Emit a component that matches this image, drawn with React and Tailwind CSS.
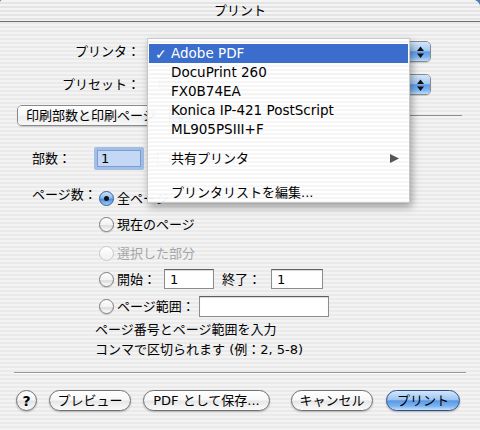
const stripes =
  "bg-[image:repeating-linear-gradient(180deg,#f3f3f3_0px,#f3f3f3_2px,#eaeaea_2px,#eaeaea_4px)]";

function Arrows() {
  return (
    <svg width="9" height="14" viewBox="0 0 9 14">
      <polygon points="4.5,1.5 8,6 1,6" fill="#111" />
      <polygon points="1,8.5 8,8.5 4.5,13" fill="#111" />
    </svg>
  );
}

function Popup({ className, children }) {
  return (
    <div
      className={
        "flex h-[21px] rounded-[5px] border border-[#8a8a8a] overflow-hidden shadow-[0_1px_1px_rgba(0,0,0,0.15)] " +
        className
      }
    >
      <div className="flex-1 flex items-center pl-[9px] bg-[linear-gradient(180deg,#ffffff_0%,#f6f6f6_50%,#ebebeb_51%,#f8f8f8_100%)] text-[#8a8a8a]">
        {children}
      </div>
      <div className="w-[21px] flex items-center justify-center border-l border-[#41649e] bg-[linear-gradient(180deg,#d3e6fb_0%,#a4caf4_45%,#5f9ce6_52%,#7fb6f2_80%,#bcdcfb_100%)]">
        <Arrows />
      </div>
    </div>
  );
}

function Field({ className, value }) {
  return (
    <div
      className={
        "flex items-center pl-[5px] bg-white border border-[#8c8c8c] border-t-[#5e5e5e] shadow-[inset_0_1px_1px_rgba(0,0,0,0.15)] " +
        className
      }
    >
      {value}
    </div>
  );
}

function Radio({ checked, disabled }) {
  if (checked) {
    return (
      <div className="w-[15px] h-[15px] rounded-full border border-[#3a5d96] flex items-center justify-center bg-[linear-gradient(180deg,#cfe3fb_0%,#8dbcf0_45%,#4f8fe0_55%,#9ccaf7_100%)]">
        <div className="w-[5px] h-[5px] rounded-full bg-[#111]" />
      </div>
    );
  }
  return (
    <div
      className={
        disabled
          ? "w-[15px] h-[15px] rounded-full border border-[#c8c8c8] bg-[linear-gradient(180deg,#ffffff,#f0f0f0)]"
          : "w-[15px] h-[15px] rounded-full border border-[#7c7c7c] bg-[linear-gradient(180deg,#ffffff_0%,#f2f2f2_50%,#dcdcdc_60%,#ffffff_100%)] shadow-[0_1px_1px_rgba(0,0,0,0.15)]"
      }
    />
  );
}

function Button({ className, children, blue }) {
  return (
    <div
      className={
        (blue
          ? "border-[#2e4f8c] bg-[linear-gradient(180deg,#d3e6fb_0%,#9cc5f3_45%,#5a98e4_52%,#7cb4f1_80%,#c5e1fc_100%)] "
          : "border-[#6f6f6f] bg-[linear-gradient(180deg,#ffffff_0%,#f7f7f7_48%,#e6e6e6_52%,#fbfbfb_100%)] ") +
        "h-[21px] rounded-full border flex items-center justify-center shadow-[0_1px_2px_rgba(0,0,0,0.25)] " +
        className
      }
    >
      {children}
    </div>
  );
}

function Menu() {
  const printers = ["DocuPrint 260", "FX0B74EA", "Konica IP-421 PostScript", "ML905PSIII+F"];
  return (
    <div className="absolute left-[147px] top-[38px] w-[263px] h-[165px] pt-[5px] bg-[image:repeating-linear-gradient(180deg,rgba(255,255,255,0.95)_0px,rgba(255,255,255,0.95)_2px,rgba(246,246,246,0.95)_2px,rgba(246,246,246,0.95)_4px)] border border-[#c9c9c9] shadow-[2px_4px_8px_rgba(0,0,0,0.35)]">
      <div className="h-[19px] mx-[1px] flex items-center bg-[#3a6dcc] text-white">
        <span className="w-[22px] pl-[6px] text-[14px] font-bold">✓</span>
        <span className="text-[13.5px]">Adobe PDF</span>
      </div>
      {printers.map((p) => (
        <div key={p} className="h-[19px] flex items-center pl-[23px] text-[13.5px]">
          {p}
        </div>
      ))}
      <div className="h-[10px]" />
      <div className="h-[19px] flex items-center pl-[23px] pr-[10px] justify-between">
        <span>共有プリンタ</span>
        <svg width="9" height="9" viewBox="0 0 9 9">
          <polygon points="0,0 9,4.5 0,9" fill="#555" />
        </svg>
      </div>
      <div className="h-[15px]" />
      <div className="h-[19px] flex items-center pl-[23px]">プリンタリストを編集...</div>
    </div>
  );
}

export default function App() {
  return (
    <div
      className="relative w-[480px] h-[430px] overflow-hidden bg-[#4f7ab8] text-[13px] text-black leading-none"
      style={{ fontFamily: '"DejaVu Sans", "Noto Sans CJK JP", sans-serif' }}
    >
      <div className={"relative w-[480px] h-[430px] rounded-tr-[7px] rounded-tl-[3px] " + stripes}>
        <div className="h-[22px] flex items-center justify-center border-b border-[#6c6c6c] bg-[image:repeating-linear-gradient(180deg,#f4f4f4_0px,#f4f4f4_2px,#e4e4e4_2px,#e4e4e4_4px)] rounded-tr-[7px] rounded-tl-[3px]">
          プリント
        </div>

        <div className="mt-[19px] flex items-center">
          <div className="w-[140px] text-right">プリンタ：</div>
          <Popup className="ml-[7px] w-[284px]" />
        </div>

        <div className="mt-[12px] flex items-center">
          <div className="w-[140px] text-right">プリセット：</div>
          <Popup className="ml-[7px] w-[284px]">標準</Popup>
        </div>

        <div className="mt-[10px] flex items-center pl-[17px] pr-[18px]">
          <Popup className="w-[174px]">
            <span className="text-black -ml-[1px]">印刷部数と印刷ページ</span>
          </Popup>
          <div className="flex-1 h-0 border-t border-[#8d8d8d]" />
        </div>

        <div className="mt-[21px] flex items-center h-[23px] pl-[32px]">
          <div className="w-[62px]">部数：</div>
          <div className="w-[50px] h-[23px] border-[3px] border-[#a3bfe6] rounded-[2px]">
            <div className="w-full h-full flex items-center pl-[3px] bg-[#c4d8f6] border border-[#7b9dd1]">1</div>
          </div>
          <div className="ml-[13px] w-[13px] h-[13px] border border-[#8a8a8a] bg-white" />
        </div>

        <div className="mt-[17px] flex items-start pl-[32px]">
          <div className="w-[67px] h-[22px] flex items-center -mt-[4px]">ページ数：</div>
          <div className="flex flex-col">
            <div className="h-[22px] flex items-center">
              <Radio checked />
              <span className="ml-[3px]">全ページ</span>
            </div>
            <div className="mt-[4px] h-[22px] flex items-center">
              <Radio />
              <span className="ml-[3px]">現在のページ</span>
            </div>
            <div className="mt-[7px] h-[22px] flex items-center">
              <Radio disabled />
              <span className="ml-[3px] text-[#a6a6a6]">選択した部分</span>
            </div>
            <div className="mt-[4px] h-[22px] flex items-center">
              <Radio />
              <span className="ml-[3px]">開始：</span>
              <Field className="ml-[8px] w-[50px] h-[20px]" value="1" />
              <span className="ml-[8px]">終了：</span>
              <Field className="ml-[10px] w-[52px] h-[20px]" value="1" />
            </div>
            <div className="mt-[5px] h-[22px] flex items-center">
              <Radio />
              <span className="ml-[3px]">ページ範囲：</span>
              <Field className="ml-[4px] w-[130px] h-[21px]" value="" />
            </div>
          </div>
        </div>

        <div className="pl-[95px] mt-[2px]">
          <div className="h-[20px] flex items-center">ページ番号とページ範囲を入力</div>
          <div className="h-[20px] flex items-center">コンマで区切られます (例：2, 5-8)</div>
        </div>

        <div className="mt-[13px] mx-[14px] border-t border-[#959595] border-b-white border-b" />

        <div className="mt-[16px] flex items-center pl-[16px]">
          <div className="w-[21px] h-[21px] rounded-full border border-[#6f6f6f] flex items-center justify-center font-bold text-[14px] bg-[linear-gradient(180deg,#ffffff_0%,#f4f4f4_48%,#e2e2e2_52%,#fbfbfb_100%)] shadow-[0_1px_2px_rgba(0,0,0,0.25)]">
            ?
          </div>
          <Button className="ml-[12px] w-[82px]">プレビュー</Button>
          <Button className="ml-[12px] w-[127px]">PDF として保存...</Button>
          <Button className="ml-[21px] w-[82px]">キャンセル</Button>
          <Button className="ml-[13px] w-[74px]" blue>
            プリント
          </Button>
        </div>

        <Menu />
      </div>
    </div>
  );
}
